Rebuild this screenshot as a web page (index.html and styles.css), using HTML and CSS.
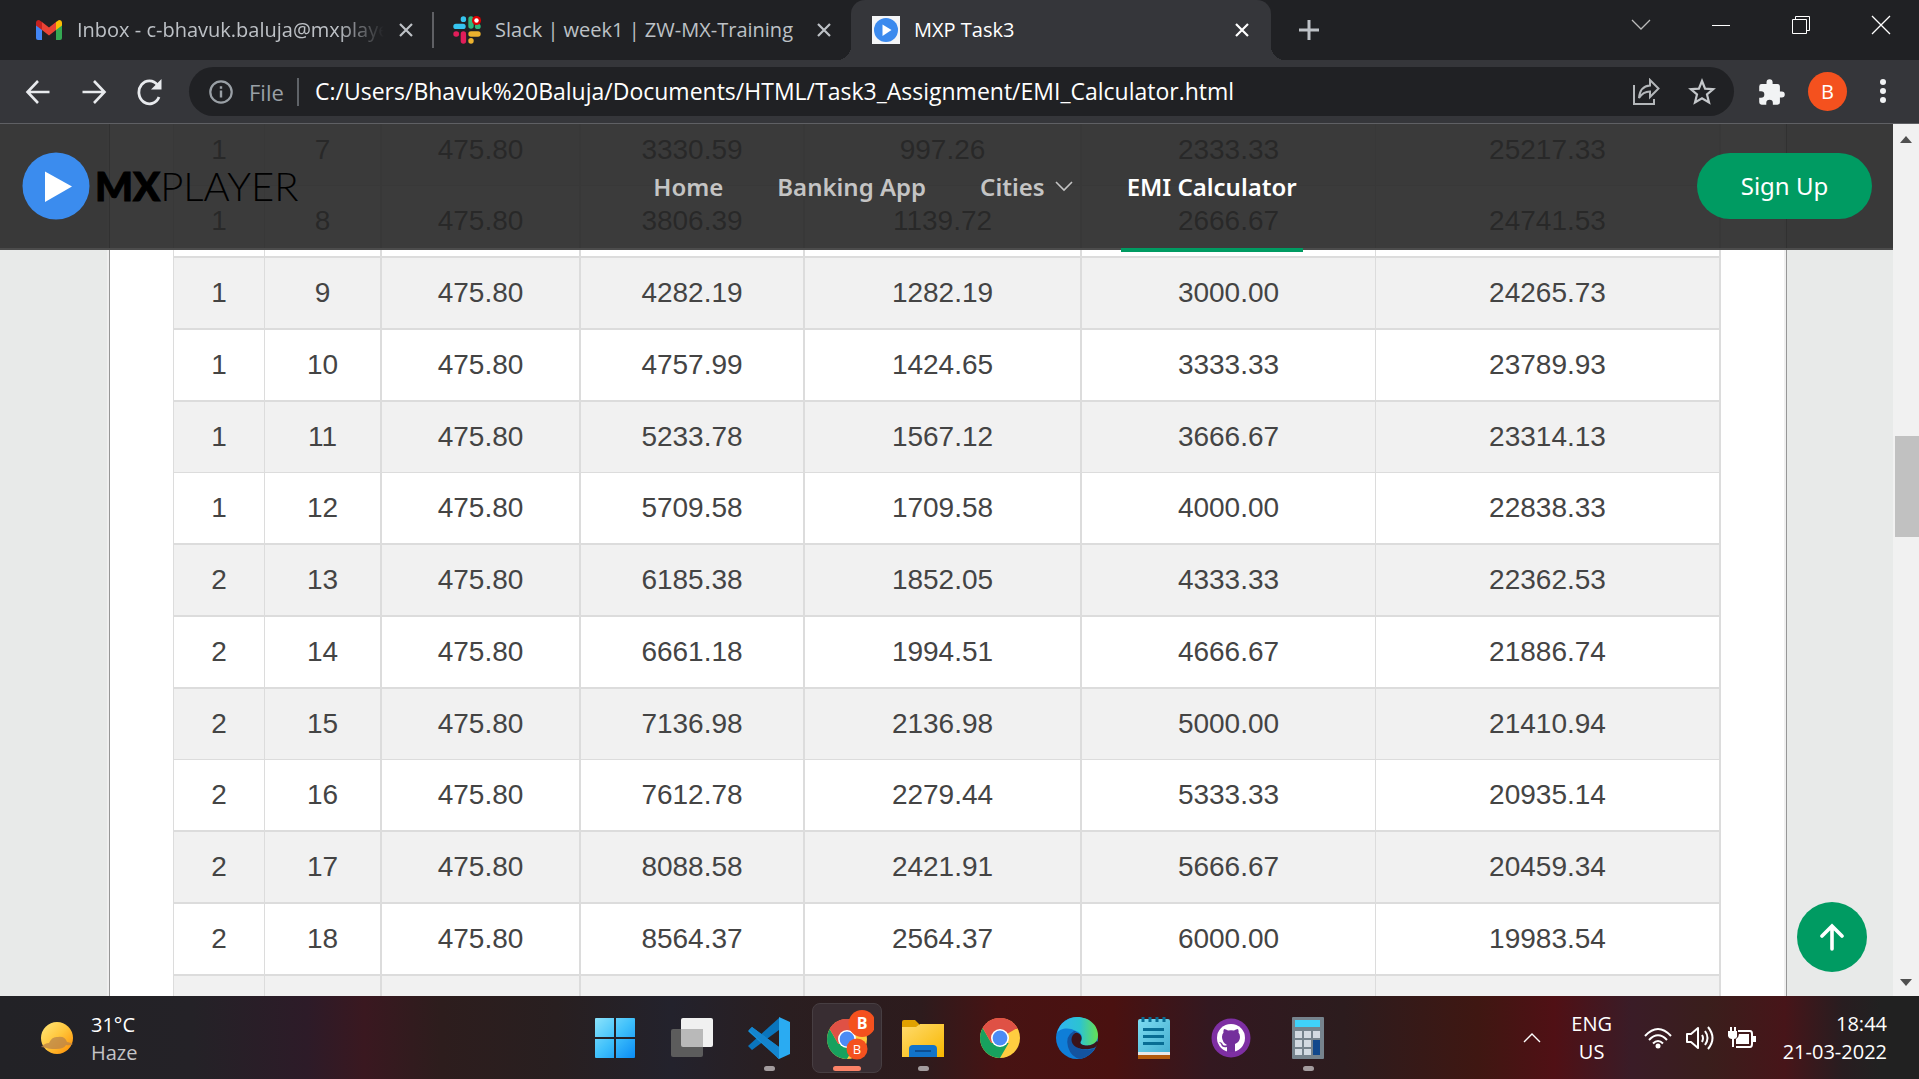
FILE: index.html
```html
<!DOCTYPE html>
<html lang="en">
<head>
<meta charset="utf-8">
<meta name="viewport" content="width=device-width, initial-scale=1">
<title>MXP Task3</title>
<link rel="stylesheet" href="styles.css">
</head>
<body>
<svg width="0" height="0" class="defs" aria-hidden="true">
  <defs>
    <linearGradient id="win" x1="0" y1="0" x2="1" y2="1"><stop offset="0" stop-color="#8be3fb"/><stop offset=".5" stop-color="#3fc0fb"/><stop offset="1" stop-color="#0a8cf5"/></linearGradient>
    <linearGradient id="sun" x1="0" y1="0" x2="1" y2="1"><stop offset="0" stop-color="#ffe87c"/><stop offset=".5" stop-color="#ffc53a"/><stop offset="1" stop-color="#ff8a00"/></linearGradient>
    <linearGradient id="edgetop" x1="0" y1="0" x2="1" y2="0"><stop offset="0" stop-color="#31b4f2"/><stop offset=".55" stop-color="#2cc3d2"/><stop offset="1" stop-color="#66e052"/></linearGradient>
    <linearGradient id="folder" x1="0" y1="0" x2="1" y2="1"><stop offset="0" stop-color="#ffdb6e"/><stop offset="1" stop-color="#f8b700"/></linearGradient>
    <linearGradient id="pad" x1="0" y1="0" x2="1" y2="1"><stop offset="0" stop-color="#7cdcf2"/><stop offset="1" stop-color="#45afd0"/></linearGradient>
    <symbol id="chrome" viewBox="0 0 40 40">
      <circle cx="20" cy="20" r="20" fill="#ffcd40"/>
      <path d="M20 20L2.700 10A20 20 0 0 1 37.300 10Z" fill="#df5145"/>
      <path d="M2.700 10A20 20 0 0 0 20 40L28.700 25L11.300 25Z" fill="#17a15e"/>
      <path d="M20 11H37.800A20 20 0 0 0 2.700 10L11.300 25L20 20Z" fill="#df5145"/>
      <circle cx="20" cy="20" r="9" fill="#fff"/><circle cx="20" cy="20" r="7.400" fill="#4c8bf5"/>
    </symbol>
    <symbol id="cross" viewBox="0 0 14 14"><path d="M1 1L13 13M13 1L1 13" stroke="currentColor" stroke-width="2.200"/></symbol>
  </defs>
</svg>

<header class="browser">
  <div class="tabstrip">
    <div class="tab tab-mail">
      <svg class="gmail" viewBox="0 0 26 20"><path d="M0 3V18a2 2 0 0 0 2 2H6V9Z" fill="#4285f4"/><path d="M26 3V18a2 2 0 0 1-2 2H20V9Z" fill="#34a853"/><path d="M0 3Q0 0 3 0L6 2V10L0 5.500Z" fill="#c5221f"/><path d="M26 3Q26 0 23 0L20 2V10L26 5.500Z" fill="#fbbc04"/><path d="M6 2L13 7.500L20 2V10L13 15.500L6 10Z" fill="#ea4335"/></svg>
      <span class="tab-title fade">Inbox - c-bhavuk.baluja@mxplaye</span>
      <button class="icon-btn" aria-label="Close tab"><svg width="14" height="14"><use href="#cross"/></svg></button>
    </div>
    <div class="tab tab-slack">
      <svg class="favicon" viewBox="0 0 28 28"><g stroke-linecap="round" stroke-width="5.400" fill="none"><path d="M3 10.400H10" stroke="#36c5f0"/><path d="M10.400 3V3.400" stroke="#36c5f0"/><path d="M18 3V10" stroke="#2eb67d"/><path d="M24.600 10.400H25" stroke="#2eb67d"/><path d="M18 18H25" stroke="#ecb22e"/><path d="M18 24.600V25" stroke="#ecb22e"/><path d="M10.400 18V25" stroke="#e01e5a"/><path d="M3 18H3.400" stroke="#e01e5a"/></g><circle cx="23.500" cy="4.500" r="4.500" fill="#e00000"/><circle cx="23.500" cy="4.500" r="2.200" fill="#fff"/></svg>
      <span class="tab-title">Slack | week1 | ZW-MX-Training</span>
      <button class="icon-btn" aria-label="Close tab"><svg width="14" height="14"><use href="#cross"/></svg></button>
    </div>
    <div class="tab tab-active">
      <svg class="favicon" viewBox="0 0 28 28"><path d="M0 0H28V28H0Z" fill="#f4f5f7"/><circle cx="14" cy="14" r="12" fill="#3b8aee"/><path d="M10.500 8.500L19.500 14L10.500 20Z" fill="#fff"/></svg>
      <span class="tab-title">MXP Task3</span>
      <button class="icon-btn" aria-label="Close tab"><svg width="14" height="14"><use href="#cross"/></svg></button>
    </div>
    <button class="icon-btn new-tab" aria-label="New tab"><svg width="20" height="20"><path d="M10 0V20M0 10H20" stroke="currentColor" stroke-width="3"/></svg></button>
    <div class="window-controls">
      <button class="icon-btn" aria-label="Search tabs"><svg width="20" height="20"><path d="M1 5L10 14L19 5" fill="none" stroke="#bbb" stroke-width="1.300"/></svg></button>
      <button class="icon-btn" aria-label="Minimize"><svg width="20" height="20"><path d="M1 10.500H19" stroke="#fff"/></svg></button>
      <button class="icon-btn" aria-label="Restore"><svg width="20" height="20"><path d="M1.500 4.500H15.500V18.500H1.500ZM4.500 4.500V1.500H18.500V15.500H15.500" fill="none" stroke="#fff"/></svg></button>
      <button class="icon-btn" aria-label="Close window"><svg width="20" height="20"><path d="M1 1L19 19M19 1L1 19" stroke="#fff" stroke-width="1.300"/></svg></button>
    </div>
  </div>
  <div class="toolbar">
    <button class="icon-btn nav-btn" aria-label="Back"><svg width="26" height="26"><path d="M24.500 13H3M13 2L2.500 13L13 24" fill="none" stroke="#e8eaed" stroke-width="2.600"/></svg></button>
    <button class="icon-btn nav-btn" aria-label="Forward"><svg width="26" height="26"><path d="M1.500 13H23M13 2L23.500 13L13 24" fill="none" stroke="#e8eaed" stroke-width="2.600"/></svg></button>
    <button class="icon-btn nav-btn" aria-label="Reload"><svg width="26" height="28"><path d="M22 19A10.500 11.500 0 1 1 20.500 7" fill="none" stroke="#e8eaed" stroke-width="2.800"/><path d="M24.500 1V11.500H14Z" fill="#e8eaed"/></svg></button>
    <form class="omnibox">
      <svg class="info" width="24" height="24"><circle cx="12" cy="12" r="10.700" fill="none" stroke="#9aa0a6" stroke-width="2.200"/><path d="M12 10.500V17.500M12 6.200V8.800" stroke="#9aa0a6" stroke-width="2.400"/></svg>
      <label for="url" class="scheme">File</label>
      <input id="url" class="url" type="text" value="C:/Users/Bhavuk%20Baluja/Documents/HTML/Task3_Assignment/EMI_Calculator.html">
      <button type="button" class="icon-btn" aria-label="Share"><svg width="28" height="28"><path d="M2 7V26H22V21" fill="none" stroke="#b4b7ba" stroke-width="2"/><path d="M7 20Q8 8 18 7.500V2L26.500 10.500L18 19V13.500Q11 13.500 7 20Z" fill="none" stroke="#b4b7ba" stroke-width="2"/></svg></button>
      <button type="button" class="icon-btn" aria-label="Bookmark"><svg width="28" height="28" viewBox="0 0 28 28"><path d="M14 3L17.100 10.600L25.200 11.200L19 16.500L21 24.500L14 20.200L7 24.500L9 16.500L2.800 11.200L10.900 10.600Z" fill="none" stroke="#c4c7ca" stroke-width="2.200"/></svg></button>
    </form>
    <button class="icon-btn ext" aria-label="Extensions"><svg width="28" height="28" viewBox="1 0 23 23"><path d="M20.500 11H19V7a2 2 0 0 0-2-2h-4V3.500a2.500 2.500 0 0 0-5 0V5H4a2 2 0 0 0-2 2v3.800h1.500a2.700 2.700 0 0 1 0 5.400H2V20a2 2 0 0 0 2 2h3.800v-1.500a2.700 2.700 0 0 1 5.400 0V22H17a2 2 0 0 0 2-2v-4h1.500a2.500 2.500 0 0 0 0-5z" fill="#f1f3f4"/></svg></button>
    <button class="avatar">B</button>
    <button class="icon-btn menu" aria-label="Menu"><svg width="8" height="28"><g fill="#f1f3f4"><circle cx="4" cy="4" r="3"/><circle cx="4" cy="13" r="3"/><circle cx="4" cy="22" r="3"/></g></svg></button>
  </div>
</header>

<div class="viewport">
  <main class="page">
    <nav class="site-nav">
      <a class="brand" href="#" aria-label="MX Player">
        <svg width="68" height="68"><circle cx="34" cy="34" r="33.500" fill="#3b8cee"/><path d="M23 19.500L50 34.500L23 50Z" fill="#fff"/></svg>
        <span class="wordmark"><b>MX</b>PLAYER</span>
      </a>
      <div class="links">
        <a class="link" href="#">Home</a>
        <a class="link" href="#">Banking App</a>
        <a class="link" href="#">Cities<svg width="18" height="12"><path d="M1 2L9 10L17 2" fill="none" stroke="currentColor" stroke-width="1.600"/></svg></a>
        <a class="link current" href="#">EMI Calculator</a>
      </div>
      <button class="signup">Sign Up</button>
    </nav>
    <section class="panel">
      <table class="schedule">
        <colgroup><col class="c-year"><col class="c-month"><col class="c-emi"><col class="c-paid"><col class="c-interest"><col class="c-principal"><col></colgroup>
        <tbody>
          <tr><td>1</td><td>7</td><td>475.80</td><td>3330.59</td><td>997.26</td><td>2333.33</td><td>25217.33</td></tr>
          <tr><td>1</td><td>8</td><td>475.80</td><td>3806.39</td><td>1139.72</td><td>2666.67</td><td>24741.53</td></tr>
          <tr><td>1</td><td>9</td><td>475.80</td><td>4282.19</td><td>1282.19</td><td>3000.00</td><td>24265.73</td></tr>
          <tr><td>1</td><td>10</td><td>475.80</td><td>4757.99</td><td>1424.65</td><td>3333.33</td><td>23789.93</td></tr>
          <tr><td>1</td><td>11</td><td>475.80</td><td>5233.78</td><td>1567.12</td><td>3666.67</td><td>23314.13</td></tr>
          <tr><td>1</td><td>12</td><td>475.80</td><td>5709.58</td><td>1709.58</td><td>4000.00</td><td>22838.33</td></tr>
          <tr><td>2</td><td>13</td><td>475.80</td><td>6185.38</td><td>1852.05</td><td>4333.33</td><td>22362.53</td></tr>
          <tr><td>2</td><td>14</td><td>475.80</td><td>6661.18</td><td>1994.51</td><td>4666.67</td><td>21886.74</td></tr>
          <tr><td>2</td><td>15</td><td>475.80</td><td>7136.98</td><td>2136.98</td><td>5000.00</td><td>21410.94</td></tr>
          <tr><td>2</td><td>16</td><td>475.80</td><td>7612.78</td><td>2279.44</td><td>5333.33</td><td>20935.14</td></tr>
          <tr><td>2</td><td>17</td><td>475.80</td><td>8088.58</td><td>2421.91</td><td>5666.67</td><td>20459.34</td></tr>
          <tr><td>2</td><td>18</td><td>475.80</td><td>8564.37</td><td>2564.37</td><td>6000.00</td><td>19983.54</td></tr>
          <tr><td></td><td></td><td></td><td></td><td></td><td></td><td></td></tr>
        </tbody>
      </table>
    </section>
    <button class="to-top" aria-label="Back to top"><svg width="24" height="28"><path d="M12 26V4M2 13L12 3L22 13" fill="none" stroke="#fff" stroke-width="3.600" stroke-linecap="round"/></svg></button>
  </main>
  <div class="scrollbar">
    <svg width="26" height="32"><path d="M13 12L19 19H7Z" fill="#505050"/></svg>
    <div class="track"><div class="thumb"></div></div>
    <svg width="26" height="32"><path d="M13 22L19 15H7Z" fill="#505050"/></svg>
  </div>
</div>

<footer class="taskbar">
  <button class="weather">
    <svg width="34" height="36"><circle cx="17" cy="17" r="16" fill="url(#sun)"/><path d="M1 26Q5 22 9 22Q12 15 18 16Q25 15 27 21Q32 22 33 23Q30 25 26 24Q24 28 16 28Q8 28 7 27Z" fill="#b9834a" opacity=".75"/></svg>
    <span class="two-line"><span>31°C</span><span class="muted">Haze</span></span>
  </button>
  <div class="apps">
    <button class="app" aria-label="Start"><svg width="42" height="42"><path d="M1 2Q1 1 2 1H20V20H1ZM22 1H40Q41 1 41 2V20H22ZM1 22H20V41H2Q1 41 1 40ZM22 22H41V40Q41 41 40 41H22Z" fill="url(#win)"/></svg></button>
    <button class="app" aria-label="Task view"><svg width="42" height="42"><rect x="10" y="1" width="32" height="29" rx="2" fill="#f0f0f0"/><rect x="0" y="12" width="32" height="28" rx="2" fill="#5c5c5c"/><path d="M10 12H32V30H12Q10 30 10 28Z" fill="#b9b9b9"/></svg></button>
    <button class="app running" aria-label="Visual Studio Code"><svg width="42" height="42"><path d="M0 29L4 33L31 13V1Z" fill="#0a75bd"/><path d="M0 14L4 10L31 30V42L2 16Z" fill="#1593db"/><path d="M31 0L42 5V37L31 42L29 40L31 36V6Z" fill="#2aabf2"/><path d="M1 13L4 10L31 30V42Z" fill="#1485cf"/></svg></button>
    <button class="app focused" aria-label="Chrome, active"><svg width="56" height="56"><use href="#chrome" x="9" y="9" width="40" height="40"/><circle cx="44" cy="13.500" r="13.500" fill="#f4511e"/><circle cx="39" cy="39" r="10.500" fill="#f4511e"/><text x="44" y="19" class="badge-lg">B</text><text x="39" y="44" class="badge-sm">B</text></svg></button>
    <button class="app running" aria-label="File Explorer"><svg width="42" height="42"><path d="M0 5Q0 3 2 3H13L17 7V14H0Z" fill="#e0a100"/><path d="M0 10H14L18 7H42V40H0Z" fill="url(#folder)"/><path d="M7 40V32Q7 28 11 28H31Q35 28 35 32V40Z" fill="#1173ca"/><path d="M13 34H29" stroke="#0b4e93" stroke-width="2"/></svg></button>
    <button class="app" aria-label="Chrome"><svg width="40" height="40"><use href="#chrome" width="40" height="40"/></svg></button>
    <button class="app" aria-label="Edge"><svg width="42" height="42"><circle cx="21" cy="21" r="21" fill="#0f7ed8"/><path d="M1 16C4 5 13 0 21 0C34 0 42 9 42 18C42 26 36 28.500 31 28.500C27 28.500 24 27 24.500 25C27 22 27 16 20 14C12 9 3 12 1 16Z" fill="url(#edgetop)"/><path d="M18 14Q9 19 12 30Q15 40 24 42Q34 40 39 31Q27 36 20 29Q14 22 20 14Z" fill="#14539f"/><path d="M20 15.500C14 18 14 27 20 30C27 34 34 32 39 30.500L43 26L41 24C37 28 33 28.500 31 28.500C27 28.500 24 27 24.500 25C27 21 25 16 20 15.500Z" fill="#3b1319"/></svg></button>
    <button class="app" aria-label="Notepad"><svg width="34" height="42"><path d="M1 36H33V42H1Z" fill="#b35a0c"/><path d="M1 34H33V38H1Z" fill="#e8e8e8"/><path d="M1 4Q1 2 3 2H31Q33 2 33 4V35H1Z" fill="url(#pad)"/><path d="M6 0V5M13 0V5M20 0V5M27 0V5M6 12.500H27M6 19.500H27M6 26.500H27" stroke="#086d94" stroke-width="3"/></svg></button>
    <button class="app" aria-label="GitHub Desktop"><svg width="40" height="40"><circle cx="20" cy="20" r="19.500" fill="#7e2fa3"/><circle cx="20" cy="20" r="14" fill="#fff"/><path d="M16 34V29Q11 30 10 26Q9 25 8 24Q11 24 12 27Q14 28 16 27Q11 24 11 19Q11 16 12.500 14.500Q12 13 13 11Q15 11 17 12.500Q20 12 23 12.500Q25 11 27 11Q28 13 27.500 14.500Q29 16 29 19Q29 24 24 26V34Z" fill="#74309c"/></svg></button>
    <button class="app running" aria-label="Calculator"><svg width="32" height="42"><rect width="32" height="42" rx="1" fill="#76838d"/><path d="M3 3H28V10H3Z" fill="#3fd2fb"/><path d="M3 14H10V21H3ZM12 14H19V21H12ZM21 14H28V21H21ZM3 23H10V30H3ZM12 23H19V30H12ZM3 32H10V38H3ZM12 32H19V38H12Z" fill="#d3dae2"/><path d="M21 23H28V38H21Z" fill="#12488c"/></svg></button>
  </div>
  <div class="tray">
    <button class="icon-btn" aria-label="Hidden icons"><svg width="18" height="12"><path d="M1 10L9 2L17 10" fill="none" stroke="#fff" stroke-width="1.400"/></svg></button>
    <button class="two-line lang"><span>ENG</span><span>US</span></button>
    <button class="status" aria-label="Network, sound, battery">
      <svg width="28" height="22"><g fill="none" stroke="#fff" stroke-width="2"><path d="M1 9Q14-5 27 9"/><path d="M5 13Q14 3.500 23 13"/><path d="M9 16.500Q14 11.500 19 16.500"/></g><circle cx="14" cy="19" r="2.500" fill="#fff"/></svg>
      <svg width="28" height="24"><g fill="none" stroke="#fff" stroke-width="2" stroke-linejoin="round"><path d="M1 9V16H5L12 22V2L5 8H1Z"/><path d="M16 9Q18 12 16 16M19 5Q24 12 19 19M22 1Q31 12 22 23"/></g></svg>
      <svg width="28" height="24"><path d="M10 5H22Q24 5 24 8V18Q24 21 22 21H8" fill="none" stroke="#fff" stroke-width="2"/><path d="M11 8H21V18H8V13Q11 11 11 8ZM25 10H28V16H25ZM0 5H9V11Q8 13 6 13V21H4V13Q1 13 0 10ZM2 1H4V5H2ZM6 1H8V5H6Z" fill="#fff"/></svg>
    </button>
    <button class="two-line clock"><span>18:44</span><span>21-03-2022</span></button>
  </div>
</footer>
</body>
</html>
```
FILE: styles.css
```css
* { box-sizing: border-box; }
body {
  margin: 0;
  height: 100vh;
  display: flex;
  flex-direction: column;
  overflow: hidden;
  font-family: "Noto Sans", "Open Sans", sans-serif;
  background: #e8eae9;
}
button { border: 0; background: none; padding: 0; font: inherit; color: inherit; }
a { color: inherit; text-decoration: none; }
svg { display: block; flex: none; }
.defs { position: absolute; }
.icon-btn { display: flex; align-items: center; justify-content: center; flex: none; }

/* Browser frame */
.browser { flex: none; background: #35363a; border-bottom: 1px solid #5f6064; font-family: "Open Sans", sans-serif; }
.tabstrip { display: flex; align-items: stretch; height: 60px; background: #202124; color: #bdc1c6; font-size: 20px; }
.tab { display: flex; align-items: center; }
.tab-title { flex: 1; min-width: 0; padding-bottom: 2px; white-space: nowrap; overflow: hidden; }
.fade { mask-image: linear-gradient(90deg, #000 85%, transparent); }
.tab-mail { width: 434px; padding: 0 21px 0 36px; background: linear-gradient(#5f6064, #5f6064) right / 2px 36px no-repeat; }
.gmail { width: 26px; height: 20px; margin-right: 15px; }
.tab-mail .tab-title { margin-right: 15px; }
.favicon { width: 28px; height: 28px; margin-right: 14px; }
.tab-slack { width: 417px; padding: 0 20px 0 19px; }
.tab-active { position: relative; width: 420px; padding: 0 22px 0 21px; background: #35363a; color: #fff; border-radius: 14px 14px 0 0; }
.tab-active::before, .tab-active::after { content: ""; position: absolute; bottom: 0; width: 14px; height: 14px; }
.tab-active::before { right: 100%; background: radial-gradient(circle at 0 0, transparent 14px, #35363a 14px); }
.tab-active::after { left: 100%; background: radial-gradient(circle at 100% 0, transparent 14px, #35363a 14px); }
.new-tab { width: 76px; }
.window-controls { display: flex; gap: 60px; margin: 0 28px 10px auto; }
.toolbar { display: flex; align-items: center; height: 63px; padding: 0 32px 0 10px; }
.nav-btn { width: 56px; height: 48px; }
.omnibox { flex: 1; display: flex; align-items: center; gap: 28px; height: 49px; margin: 0 24px 0 11px; padding: 0 18px 0 20px; border-radius: 25px; background: #202124; font-size: 22px; }
.info { margin-right: -12px; }
.scheme { width: 50px; margin-right: -12px; color: #9aa0a6; border-right: 2px solid #5f6368; line-height: 28px; }
.url { flex: 1; min-width: 0; border: 0; padding: 0 0 2px; outline: 0; background: none; color: #fff; font: inherit; font-size: 23px; }
.avatar { width: 39px; height: 39px; margin: 0 32px 0 22px; border-radius: 50%; background: #f4511e; color: #fff; font-size: 20px; }

/* Page */
.viewport { flex: 1; min-height: 0; display: flex; overflow: hidden; }
.page { flex: 1; position: relative; overflow: hidden; }
.site-nav {
  position: absolute;
  inset: 0 0 auto;
  z-index: 1;
  height: 126px;
  display: grid;
  grid-template-columns: 1fr auto 1fr;
  align-items: center;
  padding: 0 21px 0 22px;
  background: rgba(38, 38, 38, .9);
  border-bottom: 2px solid #4c4c4c;
}
.brand { display: flex; align-items: center; gap: 5px; }
.wordmark { font: 300 40px/48px Lato, sans-serif; color: #000; }
.wordmark b { font-weight: 900; -webkit-text-stroke: 1px #000; }
.links { display: flex; height: 124px; margin-left: 56px; gap: 42px; color: #c4c4c4; font-size: 24px; font-weight: 600; }
.link { display: flex; align-items: center; gap: 10px; height: 128px; padding: 0 6px; border-bottom: 4px solid transparent; }
.current { color: #fff; border-bottom-color: #009b62; }
.signup { justify-self: end; width: 175px; height: 66px; padding-bottom: 2px; border-radius: 33px; background: #009b62; color: #fff; font-size: 24px; }
.panel { margin: 0 106px 0 107px; padding: 0 63px; background: #fff; border: solid #f0f0f0; border-width: 0 3px; position: relative; }
.panel::before, .panel::after { content: ""; position: absolute; top: 0; bottom: 0; width: 1px; background: #979797; }
.panel::before { left: -1px; }
.panel::after { right: -3px; }
.schedule { width: 100%; margin-top: -9px; table-layout: fixed; border-collapse: separate; border-spacing: 0; border-left: 1px solid #dcdcdc; font: 28px/32px "Liberation Sans", Arial, sans-serif; color: #444; text-align: center; }
.c-year { width: 91px; }
.c-month { width: 117px; }
.c-emi { width: 199px; }
.c-paid { width: 224px; }
.c-interest { width: 277px; }
.c-principal { width: 294px; }
.schedule td { height: 72px; padding: 0; border: solid #dcdcdc; border-width: 0 2px 2px 0; }
.schedule td:nth-child(1), .schedule td:nth-child(6) { border-right-width: 1px; }
.schedule tr:nth-child(4n+1) td { height: 71px; border-bottom-width: 1px; }
.schedule tr:nth-child(odd) { background: #f1f1f1; }
.to-top { position: absolute; right: 26px; bottom: 24px; width: 70px; height: 70px; border-radius: 50%; background: #009b62; display: flex; align-items: center; justify-content: center; }
.scrollbar { width: 26px; flex: none; display: flex; flex-direction: column; background: #f1f1f1; }
.track { flex: 1; padding-top: 280px; }
.thumb { height: 101px; margin-left: 2px; background: #c1c1c1; }

/* Taskbar */
.taskbar {
  flex: none;
  height: 83px;
  display: grid;
  grid-template-columns: 1fr auto 1fr;
  color: #fff;
  font: 20px/28px "Open Sans", sans-serif;
  background: linear-gradient(90deg, #222226 0, #242227 10%, #2d1b28 16%, #3a1820 19%, #2d1d1d 23%, #281f20 29%, #23222c 35%, #2a1e20 41%, #2d1b1d 48%, #471313 52%, #4a1110 58%, #331820 63%, #2c1c1e 70%, #3f1712 77%, #501015 81%, #3a1c27 85%, #3a1e1c 89%, #471519 93%, #281d20 96%, #212121 98%);
}
.two-line { display: flex; flex-direction: column; }
.muted { color: #c4c4c6; }
.weather { display: flex; align-items: center; justify-self: start; gap: 17px; padding: 3px 0 0 40px; text-align: left; }
.apps { display: flex; margin-left: 4px; }
.app { position: relative; width: 77px; display: flex; align-items: center; justify-content: center; }
.running::after, .focused::after { content: ""; position: absolute; bottom: 8px; left: 33px; width: 11px; height: 5px; border-radius: 3px; background: #a39c9e; }
.focused::before { content: ""; position: absolute; inset: 7px 3px 6px 4px; border: 1px solid #473e42; border-radius: 8px; background: #382d32; }
.focused::after { left: 25px; width: 28px; background: #fb8267; }
.focused svg { position: relative; }
.badge-lg, .badge-sm { fill: #fff; text-anchor: middle; font-family: "Open Sans", sans-serif; }
.badge-lg { font-size: 16px; font-weight: 700; }
.badge-sm { font-size: 13px; }
.tray { display: flex; justify-content: flex-end; align-items: center; padding-right: 32px; }
.lang { align-items: center; width: 42px; margin: 0 31px 0 30px; }
.status { display: flex; align-items: center; gap: 14px; }
.clock { align-items: flex-end; margin-left: 27px; }
```
